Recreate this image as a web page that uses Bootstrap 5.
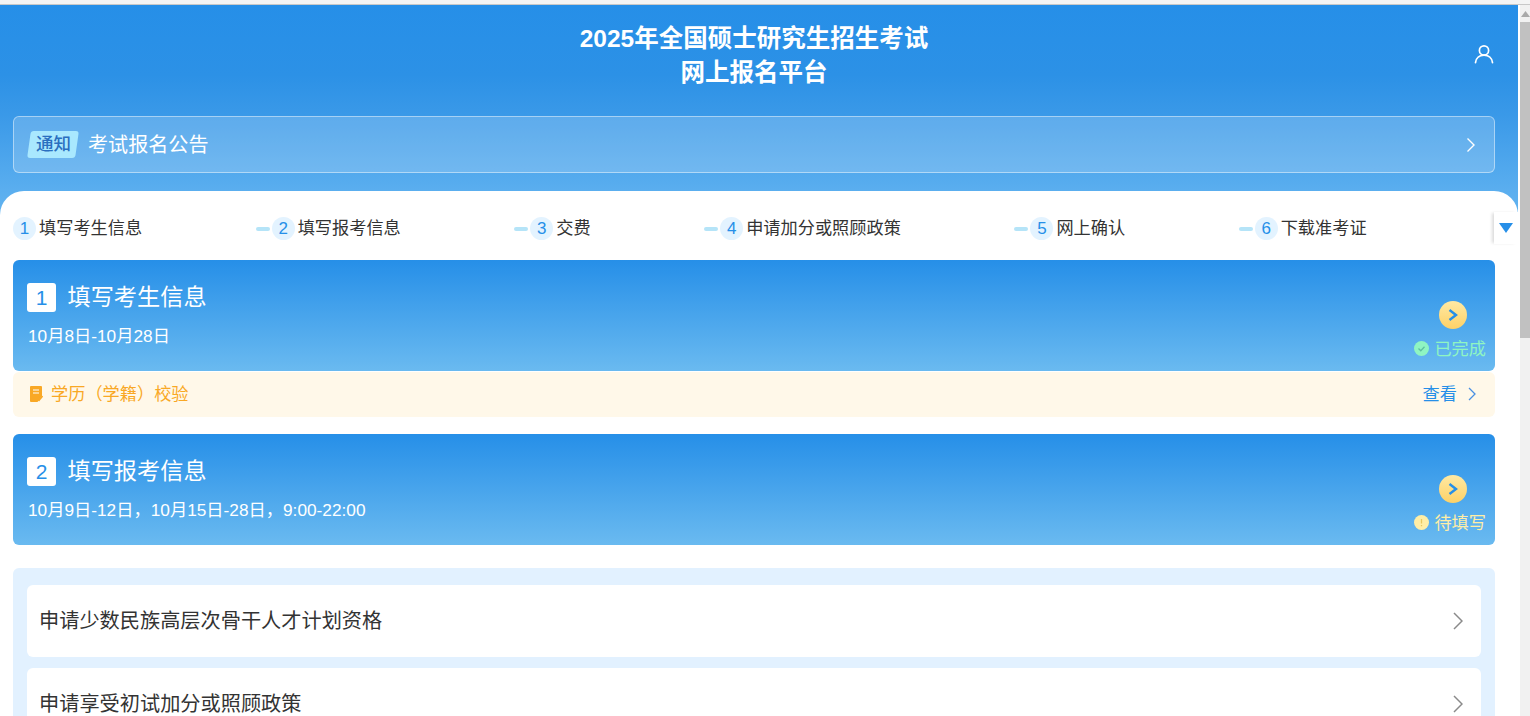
<!DOCTYPE html>
<html lang="zh-CN">
<head>
<meta charset="utf-8">
<title>网上报名平台</title>
<link href="https://cdn.jsdelivr.net/npm/bootstrap@5.3.0/dist/css/bootstrap.min.css" rel="stylesheet">
<style>
html,body{height:100%;overflow:hidden;margin:0}
body{font-family:"Liberation Sans","Noto Sans CJK SC",sans-serif;color:#333;background:#fff}
.top-strip{height:5px;background:#f4f4f4;border-bottom:1px solid #c8c8c8}
.page-wrap{height:711px}
.main-pane{width:1518px;background:linear-gradient(180deg,#268fe8 0,#2c91e6 70px,#3a99e8 110px,#5aaeef 185px,#6ab8f0 230px);background-size:100% 230px;background-repeat:no-repeat;overflow:hidden}
.scroll-rail{width:12px;background:#f1f1f1;border-left:2px solid #fff}
.scroll-up{height:17px;background:#f1f1f1}
.scroll-thumb{height:316px;background:#c1c1c1}
.hero-title{height:111px;padding-top:17px;font-size:24.5px;line-height:34px;font-weight:700;color:#fff;text-align:center;padding-right:10px}
.user-ico{right:24px;top:39px}
.notice-box{height:57px;margin:0 23px 0 13px;padding:0 18px 0 15px;background:rgba(255,255,255,.18);border:1px solid rgba(255,255,255,.45);border-radius:6px;color:#fff;font-size:20.1px}
.notice-tag{width:48px;height:27px;background:#a9e8fe;color:#2a6fc0;font-size:17.5px;font-weight:500;transform:skewX(-8deg);border-radius:3px;margin-right:11px}
.notice-tag span{transform:skewX(8deg)}
.notice-text{padding-top:1px}
.sheet{background:#fff;border-radius:24px 24px 0 0;margin-top:18px;padding-top:14px;min-height:540px}
.step-bar{height:48px;margin-bottom:7px;padding-left:13px;font-size:17.2px;color:#333;gap:113.5px;white-space:nowrap}
.step-dash{width:14px;height:4px;border-radius:2px;background:#b5e4f8;margin-right:2px}
.step-num{width:23px;height:23px;border-radius:50%;background:#e3f3ff;color:#268fe8;font-size:17px;margin-right:3px}
.step-more{right:0;top:7px;width:24px;height:32px;background:#fff;box-shadow:-3px 0 3px -1px rgba(0,0,0,.14)}
.tri-down{width:0;height:0;border-left:7.5px solid transparent;border-right:7.5px solid transparent;border-top:10px solid #268fe8;margin-left:5px}
.block-area{margin:0 23px 0 13px}
.stage-card{height:111px;border-radius:6px;background:linear-gradient(180deg,#268fe8,#6abaf0);color:#fff;padding:23px 8px 0 14px}
.stage-num{width:29px;height:29px;background:#fff;border-radius:3px;color:#268fe8;font-size:21px;margin-right:11.5px}
.stage-name{font-size:23.2px;line-height:29px}
.stage-date{font-size:17.25px;margin:11px 0 0 1px;line-height:26px}
.stage-side{right:9px;top:41px;width:72px}
.go-dot{width:28px;height:28px;border-radius:50%;background:linear-gradient(180deg,#ffe9a3,#fdd167);margin-right:19px}
.status-line{font-size:17.2px;line-height:24px;margin-top:7px;gap:5.5px;white-space:nowrap}
.status-text{padding-top:1px}
.st-done{color:#8ff5c2}
.st-wait{color:#ffeea6}
.sub-strip{height:45px;margin-top:1px;background:#fff8e9;border-radius:6px;padding:0 19px 0 17px;font-size:17.2px;color:#f9a825}
.sub-link{color:#268fe8;gap:11px}
.gap-next{margin-top:17px}
.extra-panel{margin-top:23px;background:#e2f1ff;border-radius:6px;padding:17px 14px}
.extra-row{height:72px;background:#fff;border-radius:6px;padding:0 18px 0 12px;font-size:20.2px;color:#333;margin-bottom:11px}
</style>
</head>
<body>
<div class="top-strip"></div>
<div class="page-wrap d-flex">
  <div class="main-pane position-relative">
    <div class="hero-title">2025年全国硕士研究生招生考试<br>网上报名平台</div>
    <svg class="user-ico position-absolute" width="20" height="20" viewBox="0 0 20 20" fill="none" stroke="#fff" stroke-width="1.7" stroke-linecap="round"><circle cx="10" cy="6.4" r="4.6"/><path d="M1.5 18.6c.5-4.4 4-7.4 8.500-7.400s8 3 8.500 7.400"/></svg>
    <div class="notice-box d-flex align-items-center">
      <div class="notice-tag d-flex align-items-center justify-content-center"><span>通知</span></div>
      <div class="notice-text flex-grow-1">考试报名公告</div>
      <svg width="10" height="16" viewBox="0 0 10 16" fill="none" stroke="#fff" stroke-width="1.4"><path d="M1.5 1.5 8 8l-6.500 6.500"/></svg>
    </div>
    <div class="sheet">
      <div class="position-relative">
        <div class="step-bar d-flex align-items-center">
          <div class="d-flex align-items-center"><span class="step-num d-flex align-items-center justify-content-center">1</span>填写考生信息</div>
          <div class="d-flex align-items-center"><span class="step-dash"></span><span class="step-num d-flex align-items-center justify-content-center">2</span>填写报考信息</div>
          <div class="d-flex align-items-center"><span class="step-dash"></span><span class="step-num d-flex align-items-center justify-content-center">3</span>交费</div>
          <div class="d-flex align-items-center"><span class="step-dash"></span><span class="step-num d-flex align-items-center justify-content-center">4</span>申请加分或照顾政策</div>
          <div class="d-flex align-items-center"><span class="step-dash"></span><span class="step-num d-flex align-items-center justify-content-center">5</span>网上确认</div>
          <div class="d-flex align-items-center"><span class="step-dash"></span><span class="step-num d-flex align-items-center justify-content-center">6</span>下载准考证</div>
        </div>
        <div class="step-more position-absolute d-flex align-items-center"><div class="tri-down"></div></div>
      </div>
      <div class="block-area">
        <div class="stage-card position-relative">
          <div class="d-flex align-items-center"><span class="stage-num d-flex align-items-center justify-content-center">1</span><span class="stage-name">填写考生信息</span></div>
          <div class="stage-date">10月8日-10月28日</div>
          <div class="stage-side position-absolute d-flex flex-column align-items-end">
            <div class="go-dot d-flex align-items-center justify-content-center"><svg width="14" height="14" viewBox="0 0 14 14" fill="none" stroke="#268fe8" stroke-width="2.4"><path d="M3.5 2 10 7l-6.500 5"/></svg></div>
            <div class="status-line st-done d-flex align-items-center"><svg width="15" height="15" viewBox="0 0 15 15"><circle cx="7.5" cy="7.5" r="7.5" fill="#8ff5c2"/><path d="M4.5 7.5 6.8 9.8 10.5 5.8" fill="none" stroke="#5fc0a0" stroke-width="1.3"/></svg><span class="status-text">已完成</span></div>
          </div>
        </div>
        <div class="sub-strip d-flex align-items-center justify-content-between">
          <div class="d-flex align-items-center gap-2"><svg width="13" height="16" viewBox="0 0 13 16"><path d="M0 1a1 1 0 0 1 1-1h10a1 1 0 0 1 1 1v9l-4.500 6H1a1 1 0 0 1-1-1z" fill="#f9a825"/><path d="M3 4h6M3 7h6" stroke="#fff" stroke-width="1.2"/><path d="M8.5 15l4-5" stroke="#f9a825" stroke-width="1.6"/></svg><span>学历（学籍）校验</span></div>
          <div class="sub-link d-flex align-items-center">查看<svg width="8" height="14" viewBox="0 0 8 14" fill="none" stroke="#4a90e2" stroke-width="1.3"><path d="M1 1l6 6-6 6"/></svg></div>
        </div>
        <div class="stage-card position-relative gap-next">
          <div class="d-flex align-items-center"><span class="stage-num d-flex align-items-center justify-content-center">2</span><span class="stage-name">填写报考信息</span></div>
          <div class="stage-date">10月9日-12日，10月15日-28日，9:00-22:00</div>
          <div class="stage-side position-absolute d-flex flex-column align-items-end">
            <div class="go-dot d-flex align-items-center justify-content-center"><svg width="14" height="14" viewBox="0 0 14 14" fill="none" stroke="#268fe8" stroke-width="2.4"><path d="M3.5 2 10 7l-6.500 5"/></svg></div>
            <div class="status-line st-wait d-flex align-items-center"><svg width="15" height="15" viewBox="0 0 15 15"><circle cx="7.5" cy="7.5" r="7.5" fill="#ffeea6"/><path d="M7.5 4v4.500M7.5 10v1.200" stroke="#e8c860" stroke-width="1.3"/></svg><span class="status-text">待填写</span></div>
          </div>
        </div>
        <div class="extra-panel">
          <div class="extra-row d-flex align-items-center justify-content-between"><span>申请少数民族高层次骨干人才计划资格</span><svg width="10" height="18" viewBox="0 0 10 18" fill="none" stroke="#8a8a8a" stroke-width="1.5"><path d="M1 1l8 8-8 8"/></svg></div>
          <div class="extra-row d-flex align-items-center justify-content-between"><span>申请享受初试加分或照顾政策</span><svg width="10" height="18" viewBox="0 0 10 18" fill="none" stroke="#8a8a8a" stroke-width="1.5"><path d="M1 1l8 8-8 8"/></svg></div>
        </div>
      </div>
    </div>
  </div>
  <div class="scroll-rail">
    <div class="scroll-up d-flex justify-content-center align-items-center"><svg width="9" height="6" viewBox="0 0 9 6"><path d="M4.5 0 9 6H0z" fill="#a9a9a9"/></svg></div>
    <div class="scroll-thumb"></div>
  </div>
</div>
</body>
</html>
